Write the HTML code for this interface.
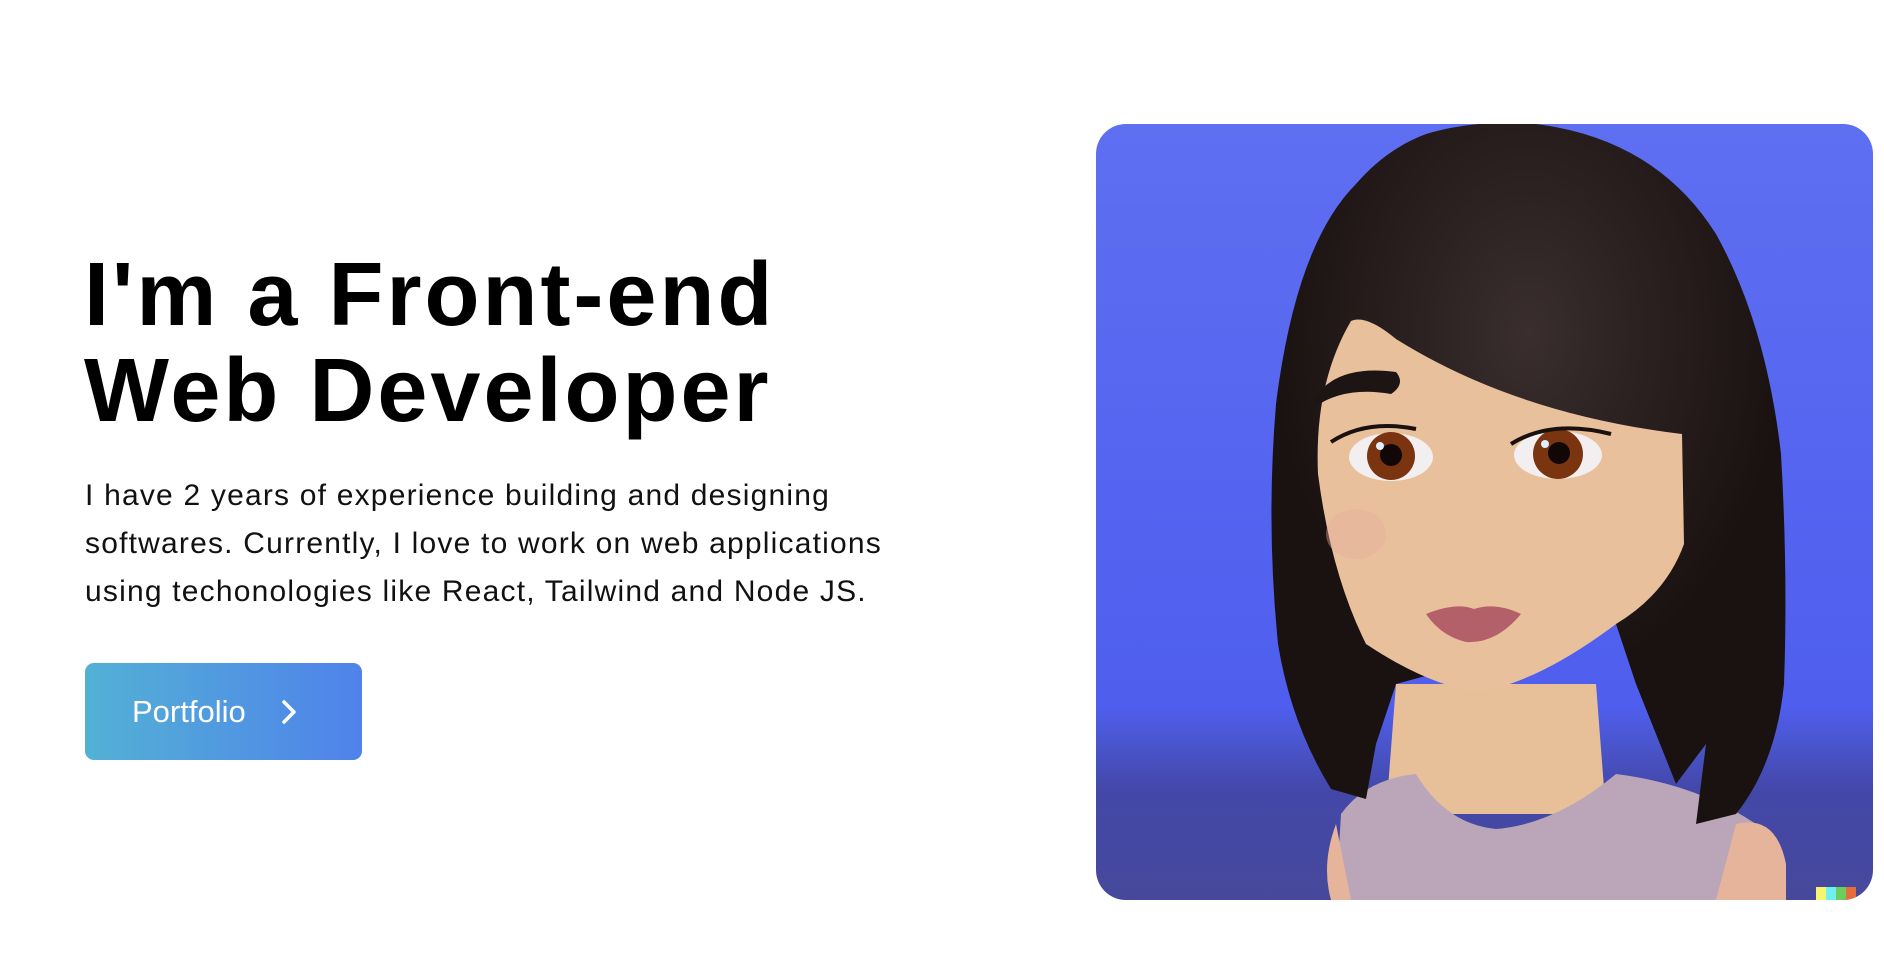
<!DOCTYPE html>
<html><head><meta charset="utf-8"><style>
*{margin:0;padding:0;box-sizing:border-box}
html,body{width:1884px;height:976px;background:#fff;overflow:hidden;font-family:"Liberation Sans",sans-serif;color:#000}
h1{position:absolute;left:84px;top:247px;font-size:90px;line-height:96px;font-weight:700;letter-spacing:3px;white-space:nowrap}
p{position:absolute;left:85px;top:472px;font-size:30px;line-height:48px;letter-spacing:1.2px;width:1000px;color:#111;white-space:nowrap}
.btn{position:absolute;left:85px;top:663px;width:277px;height:97px;border-radius:9px;background:linear-gradient(90deg,#53b1d5,#4f82ea);color:#fff;font-size:31px;line-height:97px;padding-left:47px}
.btn svg{position:absolute;left:196px;top:36px}
.pic{position:absolute;left:1096px;top:124px;width:777px;height:776px;border-radius:30px;overflow:hidden}
</style></head><body>
<h1>I'm a Front-end<br>Web Developer</h1>
<p>I have 2 years of experience building and designing<br>softwares. Currently, I love to work on web applications<br>using techonologies like React, Tailwind and Node JS.</p>
<div class="btn">Portfolio<svg width="16" height="26" viewBox="0 0 16 26"><path d="M3 3l10 10-10 10" fill="none" stroke="#fff" stroke-width="3.5" stroke-linecap="round" stroke-linejoin="round"/></svg></div>
<div class="pic"><svg width="777" height="776" viewBox="0 0 777 776">
<defs>
<linearGradient id="bg" x1="0" y1="0" x2="0" y2="1">
<stop offset="0" stop-color="#5e6ff2"/><stop offset="0.75" stop-color="#4f5eee"/><stop offset="0.8" stop-color="#4a55cc"/><stop offset="0.86" stop-color="#4347a8"/><stop offset="1" stop-color="#46499a"/></linearGradient>
<radialGradient id="hl" cx="0.5" cy="0.3" r="0.5"><stop offset="0" stop-color="#3a2e2e"/><stop offset="1" stop-color="#1a1111"/></radialGradient>
</defs>
<rect width="777" height="776" fill="url(#bg)"/>
<path d="M290 690 L300 560 L500 560 L510 690Z" fill="#e7bf98"/>
<path d="M240 776 L245 690 Q270 655 320 650 Q350 700 400 705 Q460 700 520 650 Q600 660 660 700 L668 776Z" fill="#bba5b8"/>
<path d="M640 700 Q680 690 690 740 L690 776 L620 776Z" fill="#e5b49b"/>
<path d="M240 700 Q225 740 235 776 L255 776Z" fill="#e5b49b"/>
<path d="M330 10 Q380 -5 440 0 Q560 15 620 110 Q670 200 685 330 Q692 450 688 560 Q680 640 640 690 L600 700 L610 620 L580 660 L560 610 L540 560 L520 500 L300 560 L280 620 L270 675 L235 665 Q195 600 182 520 Q170 400 180 280 Q200 120 260 60 Q290 25 330 10Z" fill="url(#hl)"/>
<path d="M255 197 Q270 190 300 215 Q420 290 586 310 L588 420 Q570 470 520 500 Q440 560 380 568 Q330 560 270 520 Q235 450 222 350 Q218 260 255 197Z" fill="#e8c19c"/>
<path d="M218 275 Q240 240 300 248 Q310 260 295 270 Q250 262 220 282Z" fill="#1d1414"/>
<ellipse cx="295" cy="333" rx="42" ry="24" fill="#f3eef0"/>
<ellipse cx="462" cy="331" rx="44" ry="24" fill="#f3eef0"/>
<circle cx="295" cy="332" r="24" fill="#7a3410"/><circle cx="295" cy="331" r="11" fill="#120707"/><circle cx="284" cy="322" r="4" fill="#ddeeff"/>
<circle cx="462" cy="330" r="25" fill="#7a3410"/><circle cx="463" cy="329" r="11" fill="#120707"/><circle cx="449" cy="320" r="4" fill="#ddeeff"/>
<path d="M235 318 Q270 295 320 305" fill="none" stroke="#1a1010" stroke-width="4"/>
<path d="M415 320 Q455 295 515 310" fill="none" stroke="#1a1010" stroke-width="4"/>
<path d="M330 490 Q360 478 378 485 Q400 478 425 490 Q400 520 370 518 Q345 512 330 490Z" fill="#b4606a"/>
<ellipse cx="260" cy="410" rx="30" ry="25" fill="#e8a9a0" opacity="0.4"/>
<rect x="720" y="763" width="10" height="13" fill="#f5f56e"/><rect x="730" y="763" width="10" height="13" fill="#6ef0f0"/><rect x="740" y="763" width="10" height="13" fill="#6ccc5c"/><rect x="750" y="763" width="10" height="13" fill="#e56c3c"/>
</svg></div>
</body></html>
